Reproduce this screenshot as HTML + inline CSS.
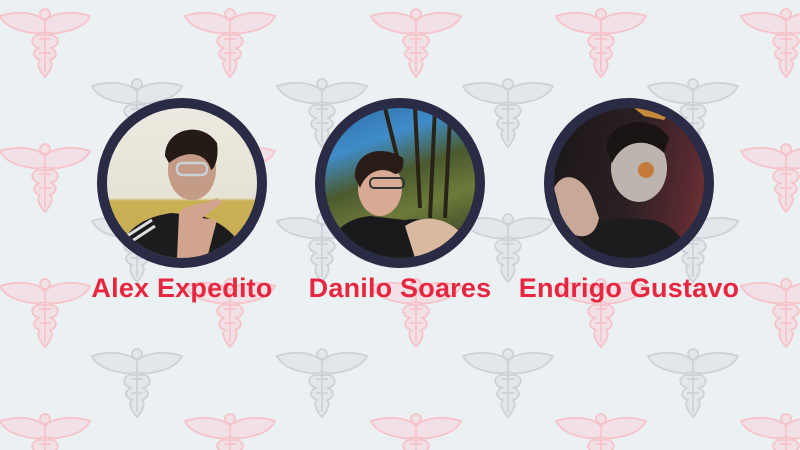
<!DOCTYPE html>
<html><head><meta charset="utf-8"><style>
html,body{margin:0;padding:0;width:800px;height:450px;overflow:hidden}
body{background:#ebf0f3;position:relative;font-family:"Liberation Sans",sans-serif}
svg.bg{position:absolute;left:0;top:0}
.av{position:absolute;top:98px;width:150px;height:150px;border:10px solid #2a2b45;border-radius:50%;overflow:hidden}
.name{position:absolute;top:273px;width:260px;text-align:center;color:#e8263f;font-weight:bold;font-size:27px;letter-spacing:0.2px}
</style></head><body>
<svg class="bg" width="800" height="450" viewBox="0 0 800 450">
<defs>
<g id="c">
<circle cx="46" cy="8" r="5"/>
<path d="M46 15 C38 7 20 4 1 10 C5 19 16 24 28 26 C35 28 40 28 46 26 C52 28 57 28 64 26 C76 24 87 19 91 10 C72 4 54 7 46 15 Z"/>
<path d="M38 29 C30 33 33 40 40 42 C32 46 35 52 41 54 C37 58 40 64 46 71 C52 64 55 58 51 54 C57 52 60 46 52 42 C59 40 62 33 54 29 Z"/>
<path d="M46 14 V66 M40 33 H52 M40 47 H52" fill="none"/>
</g>
</defs>
<g fill="#f1e1e6" stroke="#f6c3c9" stroke-width="1.8">
<use href="#c" x="-1" y="6"/><use href="#c" x="184" y="6"/><use href="#c" x="370" y="6"/><use href="#c" x="555" y="6"/><use href="#c" x="740" y="6"/>
<use href="#c" x="-1" y="141"/><use href="#c" x="184" y="141"/><use href="#c" x="370" y="141"/><use href="#c" x="555" y="141"/><use href="#c" x="740" y="141"/>
<use href="#c" x="-1" y="276"/><use href="#c" x="184" y="276"/><use href="#c" x="370" y="276"/><use href="#c" x="555" y="276"/><use href="#c" x="740" y="276"/>
<use href="#c" x="-1" y="411"/><use href="#c" x="184" y="411"/><use href="#c" x="370" y="411"/><use href="#c" x="555" y="411"/><use href="#c" x="740" y="411"/>
</g>
<g fill="#e2e7eb" stroke="#cdd2d7" stroke-width="1.8">
<use href="#c" x="91" y="76"/><use href="#c" x="276" y="76"/><use href="#c" x="462" y="76"/><use href="#c" x="647" y="76"/>
<use href="#c" x="91" y="211"/><use href="#c" x="276" y="211"/><use href="#c" x="462" y="211"/><use href="#c" x="647" y="211"/>
<use href="#c" x="91" y="346"/><use href="#c" x="276" y="346"/><use href="#c" x="462" y="346"/><use href="#c" x="647" y="346"/>
</g>
</svg>

<div class="av" style="left:97px;background:linear-gradient(#ece9e0 0%,#e6e2d6 60%,#c9b054 62%,#c6ad55 100%)">
<svg width="150" height="150" viewBox="0 0 150 150">
<path d="M10 150 C15 120 40 108 65 105 L95 108 C115 115 130 125 140 150 Z" fill="#1c1c1f"/>
<path d="M20 128 L45 112 M22 135 L48 118" stroke="#ddd" stroke-width="3"/>
<ellipse cx="85" cy="62" rx="24" ry="30" fill="#c49b86"/>
<path d="M58 48 C58 20 95 12 110 35 C112 50 108 60 104 62 C100 45 80 40 62 55 Z" fill="#241a16"/>
<rect x="70" y="55" width="30" height="12" rx="5" fill="none" stroke="#c8d0d8" stroke-width="2.5"/>
<path d="M70 150 L72 105 C80 95 95 98 110 90 L115 95 L95 110 L110 112 L100 150 Z" fill="#d1a48e"/>
</svg></div>

<div class="av" style="left:315px;background:linear-gradient(160deg,#2f6fa8 0%,#3f8cc9 25%,#4b5a2e 45%,#6c7b3a 65%,#2c3120 100%)">
<svg width="150" height="150" viewBox="0 0 150 150">
<path d="M90 0 L95 100 M110 0 L105 110 M125 10 L120 110 M60 0 L75 60" stroke="#2a2418" stroke-width="4"/>
<path d="M0 150 C5 120 25 110 45 108 L80 112 C100 108 120 115 145 150 Z" fill="#1a1a1d"/>
<path d="M80 118 C100 105 125 110 140 130 L120 150 L90 150 Z" fill="#d9b9a0"/>
<ellipse cx="55" cy="80" rx="22" ry="28" fill="#d8a993"/>
<path d="M30 70 C28 45 55 35 78 50 C80 60 76 66 70 66 C58 58 42 62 35 80 Z" fill="#2a1d18"/>
<rect x="45" y="70" width="34" height="10" rx="4" fill="none" stroke="#333" stroke-width="2"/>
</svg></div>

<div class="av" style="left:544px;background:linear-gradient(100deg,#1d1719 0%,#2a2024 50%,#5a2a30 85%,#7a3438 100%)">
<svg width="150" height="150" viewBox="0 0 150 150">
<path d="M20 150 C25 120 50 110 70 110 L100 112 C120 118 130 130 135 150 Z" fill="#1c1b1e"/>
<ellipse cx="85" cy="60" rx="28" ry="34" fill="#bdb5ad"/>
<circle cx="92" cy="62" r="8" fill="#c47a3a"/>
<path d="M52 40 C55 10 100 5 115 30 L110 45 C95 30 70 30 58 55 Z" fill="#1a1414"/>
<path d="M0 80 C10 60 30 70 38 90 L45 110 C40 135 20 130 10 120 Z" fill="#c8a898"/>
<path d="M80 0 L120 0 L110 12 L90 8 Z" fill="#c78a3a"/>
</svg></div>

<div class="name" style="left:52px">Alex Expedito</div>
<div class="name" style="left:270px">Danilo Soares</div>
<div class="name" style="left:499px">Endrigo Gustavo</div>
</body></html>
